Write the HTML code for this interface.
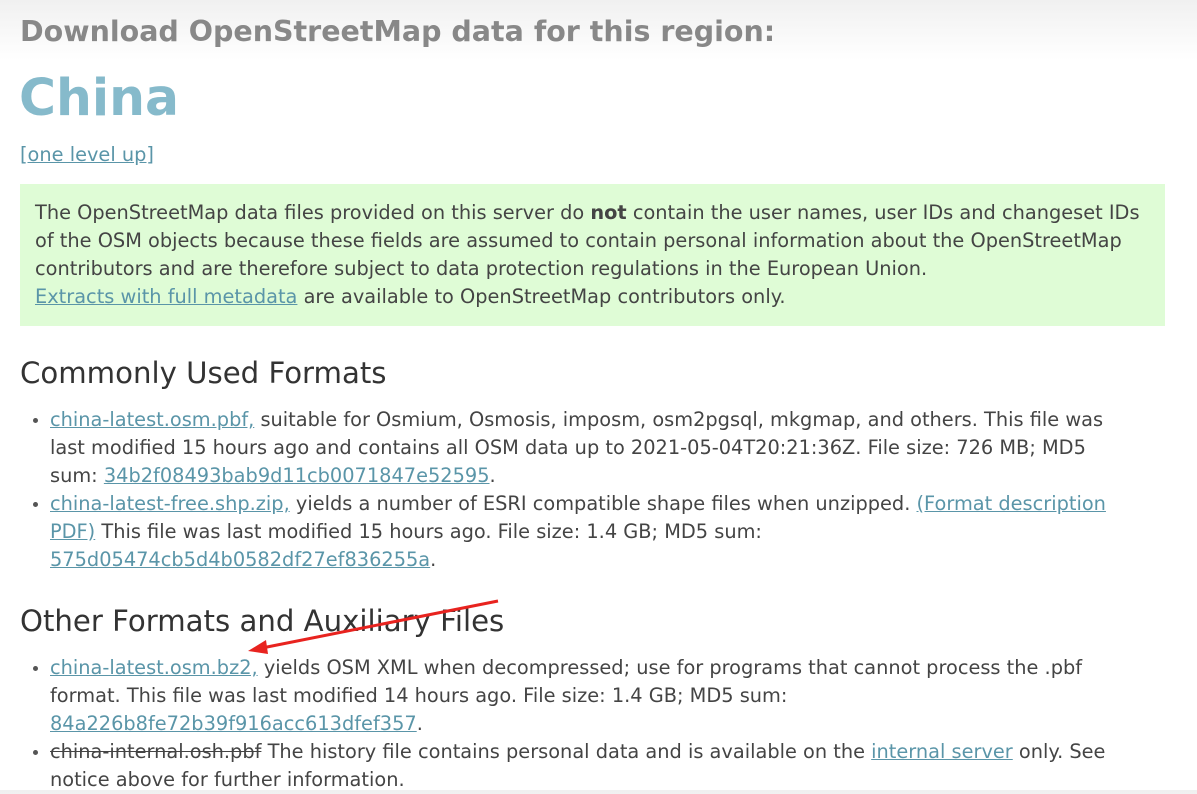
<!DOCTYPE html>
<html><head><meta charset="utf-8"><style>
body{margin:0;width:1197px;height:790px;overflow:hidden;background:linear-gradient(#f0f0f0 0,#fff 60px);font-family:"DejaVu Sans","Liberation Sans",sans-serif;color:#444;font-size:19.35px;}
.l{position:absolute;white-space:nowrap;line-height:28px}
a{color:#5a95a8;text-decoration:underline}
h1,h2,h3{margin:0;position:absolute;white-space:nowrap;font-weight:normal}
.li{position:absolute;left:50px;line-height:28px;white-space:nowrap}
.b{position:absolute;left:33px;width:5px;height:5px;border-radius:50%;background:#555}
</style></head><body>
<h3 style="left:20px;top:15px;font-size:28.5px;font-weight:bold;color:#888">Download OpenStreetMap data for this region:</h3>
<h1 style="left:19px;top:68px;font-size:50.4px;font-weight:bold;color:#86bacb">China</h1>
<div class="l" style="left:20px;top:141px"><a>[one level up]</a></div>
<div style="position:absolute;left:20px;top:184px;width:1145px;height:142px;background:#dffcd6"></div>
<div class="l" style="left:35px;top:199px">The OpenStreetMap data files provided on this server do <b>not</b> contain the user names, user IDs and changeset IDs<br>of the OSM objects because these fields are assumed to contain personal information about the OpenStreetMap<br>contributors and are therefore subject to data protection regulations in the European Union.<br><a>Extracts with full metadata</a> are available to OpenStreetMap contributors only.</div>
<h2 style="left:20px;top:356px;font-size:29.2px;color:#333">Commonly Used Formats</h2>
<div class="b" style="top:418px"></div>
<div class="li" style="top:406px"><a>china-latest.osm.pbf,</a> suitable for Osmium, Osmosis, imposm, osm2pgsql, mkgmap, and others. This file was<br>last modified 15 hours ago and contains all OSM data up to 2021-05-04T20:21:36Z. File size: 726 MB; MD5<br>sum: <a>34b2f08493bab9d11cb0071847e52595</a>.</div>
<div class="b" style="top:502px"></div>
<div class="li" style="top:490px"><a>china-latest-free.shp.zip,</a> yields a number of ESRI compatible shape files when unzipped. <a>(Format description<br>PDF)</a> This file was last modified 15 hours ago. File size: 1.4 GB; MD5 sum:<br><a>575d05474cb5d4b0582df27ef836255a</a>.</div>
<h2 style="left:20px;top:604px;font-size:29.2px;color:#333">Other Formats and Auxiliary Files</h2>
<div class="b" style="top:666px"></div>
<div class="li" style="top:654px"><a>china-latest.osm.bz2,</a> yields OSM XML when decompressed; use for programs that cannot process the .pbf<br>format. This file was last modified 14 hours ago. File size: 1.4 GB; MD5 sum:<br><a>84a226b8fe72b39f916acc613dfef357</a>.</div>
<div class="b" style="top:750px"></div>
<div class="li" style="top:738px"><s>china-internal.osh.pbf</s> The history file contains personal data and is available on the <a>internal server</a> only. See<br>notice above for further information.</div>
<svg style="position:absolute;left:0;top:0" width="1197" height="790"><line x1="498" y1="601" x2="262" y2="648" stroke="#e8231f" stroke-width="3"/><polygon points="248,651 266,640 268,654" fill="#e8231f"/></svg>
</body></html>
